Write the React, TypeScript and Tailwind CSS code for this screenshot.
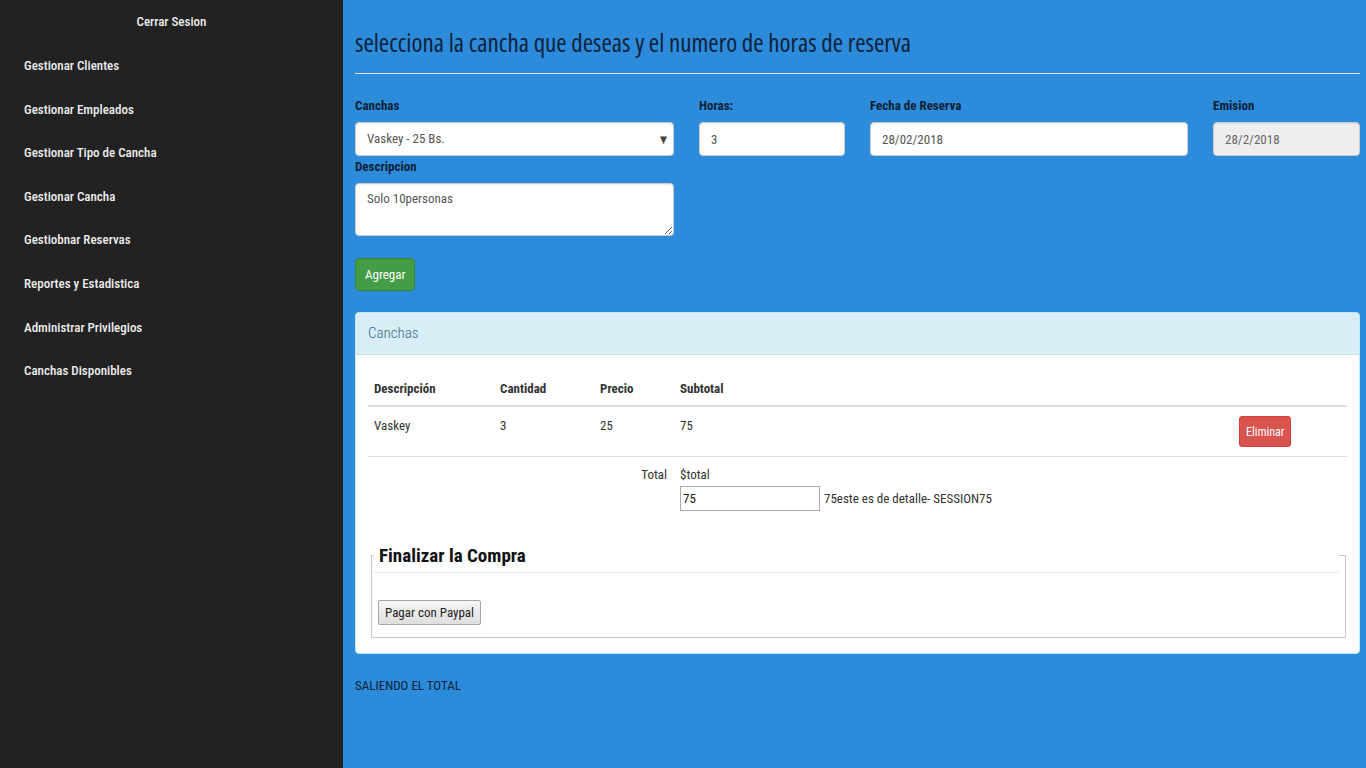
import React from 'react';

const menu = [
  'Gestionar Clientes',
  'Gestionar Empleados',
  'Gestionar Tipo de Cancha',
  'Gestionar Cancha',
  'Gestiobnar Reservas',
  'Reportes y Estadistica',
  'Administrar Privilegios',
  'Canchas Disponibles',
];

const inputCls =
  'h-[34px] w-full rounded-[4px] border border-[#ccc] px-[11px] text-[13px] text-[#555] shadow-[inset_0_1px_1px_rgba(0,0,0,0.075)] outline-none';

function Label({ children }: { children: React.ReactNode }) {
  return <label className="block h-[16px] text-[13px] font-bold leading-[16px] text-[#0d1f33]">{children}</label>;
}

export default function App() {
  return (
    <div className="flex min-h-screen w-full font-['Roboto_Condensed','DejaVu_Sans_Condensed',Roboto,sans-serif] text-[13px]">
      <aside className="w-[343px] shrink-0 bg-[#222222] text-[#eeeeee]">
        <div className="flex h-[43px] items-center justify-center font-medium">Cerrar Sesion</div>
        <ul className="pt-[1px]">
          {menu.map((m) => (
            <li key={m} className="flex h-[43.6px] items-center pl-[24px] font-medium">
              {m}
            </li>
          ))}
        </ul>
      </aside>

      <main className="flex-1 bg-[#2d8bdc] pb-[60px] pl-[12px] pr-[6px] text-[#0d1f33]">
        <h1 className="pt-[27px] font-['Open_Sans',sans-serif] text-[25px] font-normal leading-[30px] text-[#0f2238] [font-stretch:75%]">
          selecciona la cancha que deseas y el numero de horas de reserva
        </h1>
        <hr className="mt-[16px] border-t border-[#d5e7f7]" />

        <div className="mt-[24px] grid grid-cols-[319px_146px_318px_147px] gap-x-[25px]">
          <div>
            <Label>Canchas</Label>
            <div className={`${inputCls} mt-[8px] flex items-center justify-between bg-white pr-[6px]`}>
              <span>Vaskey - 25 Bs.</span>
              <span className="text-[10px] text-[#444]">▼</span>
            </div>
          </div>
          <div>
            <Label>Horas:</Label>
            <input className={`${inputCls} mt-[8px] bg-white`} defaultValue="3" />
          </div>
          <div>
            <Label>Fecha de Reserva</Label>
            <input className={`${inputCls} mt-[8px] bg-white`} defaultValue="28/02/2018" />
          </div>
          <div>
            <Label>Emision</Label>
            <input className={`${inputCls} mt-[8px] bg-[#eeeeee] text-[#666]`} defaultValue="28/2/2018" readOnly />
          </div>
        </div>

        <div className="mt-[3px] w-[319px]">
          <Label>Descripcion</Label>
          <textarea
            className="mt-[8px] block h-[53px] w-full rounded-[4px] border border-[#ccc] bg-white px-[11px] py-[6px] text-[13px] leading-[18px] text-[#555] shadow-[inset_0_1px_1px_rgba(0,0,0,0.075)] outline-none"
            defaultValue="Solo 10personas"
          />
        </div>

        <button className="mt-[22px] h-[33px] rounded-[4px] border border-[#398439] bg-[#449d44] px-[9px] text-[13px] text-white">
          Agregar
        </button>

        <section className="mt-[21px] w-[1005px] overflow-hidden rounded-[4px] border border-[#bce8f1] bg-white">
          <div className="flex h-[42px] items-center border-b border-[#bce8f1] bg-[#d9edf7] pl-[12px] text-[15px] font-light text-[#31708f]">
            Canchas
          </div>
          <div className="px-[12px] pb-[15px] pt-[14px] text-[#333]">
            <div className="grid grid-cols-[126px_100px_80px_1fr_115px] border-b-2 border-[#dddddd] font-bold">
              <div className="px-[6px] pb-[6px] pt-[10px] leading-[20px]">Descripción</div>
              <div className="px-[6px] pb-[6px] pt-[10px] leading-[20px]">Cantidad</div>
              <div className="px-[6px] pb-[6px] pt-[10px] leading-[20px]">Precio</div>
              <div className="px-[6px] pb-[6px] pt-[10px] leading-[20px]">Subtotal</div>
              <div />
            </div>
            <div className="grid h-[50px] grid-cols-[126px_100px_80px_1fr_115px] border-b border-[#dddddd]">
              <div className="px-[6px] pt-[9px] leading-[20px]">Vaskey</div>
              <div className="px-[6px] pt-[9px] leading-[20px]">3</div>
              <div className="px-[6px] pt-[9px] leading-[20px]">25</div>
              <div className="px-[6px] pt-[9px] leading-[20px]">75</div>
              <div className="pl-[7px] pt-[9px]">
                <button className="h-[31px] rounded-[3px] border border-[#d43f3a] bg-[#d9534f] px-[6px] text-[12px] text-white">
                  Eliminar
                </button>
              </div>
            </div>
            <div className="grid grid-cols-[306px_1fr] py-[8px]">
              <div className="pr-[7px] text-right leading-[20px]">Total</div>
              <div className="px-[6px]">
                <div className="leading-[20px]">$total</div>
                <div className="mt-[1px] flex items-center">
                  <input
                    className="h-[25px] w-[140px] border border-[#a9a9a9] px-[2px] text-[13px] text-[#222] outline-none"
                    defaultValue="75"
                  />
                  <span className="ml-[4px]">75este es de detalle- SESSION75</span>
                </div>
              </div>
            </div>

            <fieldset className="ml-[3px] mr-[1px] mt-[18px] border border-[#c8c8c8] px-[2px] pb-[12px]">
              <legend className="w-[965px] border-b border-[#e5e5e5] px-[5px] pb-[4px] pt-[7px] text-[19px] font-bold leading-[24px] text-[#111]">
                Finalizar la Compra
              </legend>
              <button className="ml-[4px] mt-[27px] h-[25px] rounded-[2px] border border-[#a6a6a6] bg-gradient-to-b from-[#f6f6f6] to-[#dedede] px-[6px] text-[13px] text-[#222]">
                Pagar con Paypal
              </button>
            </fieldset>
          </div>
        </section>

        <p className="mt-[24px] text-[13px] leading-[16px] text-[#0d1f33]">SALIENDO EL TOTAL</p>
      </main>
    </div>
  );
}
